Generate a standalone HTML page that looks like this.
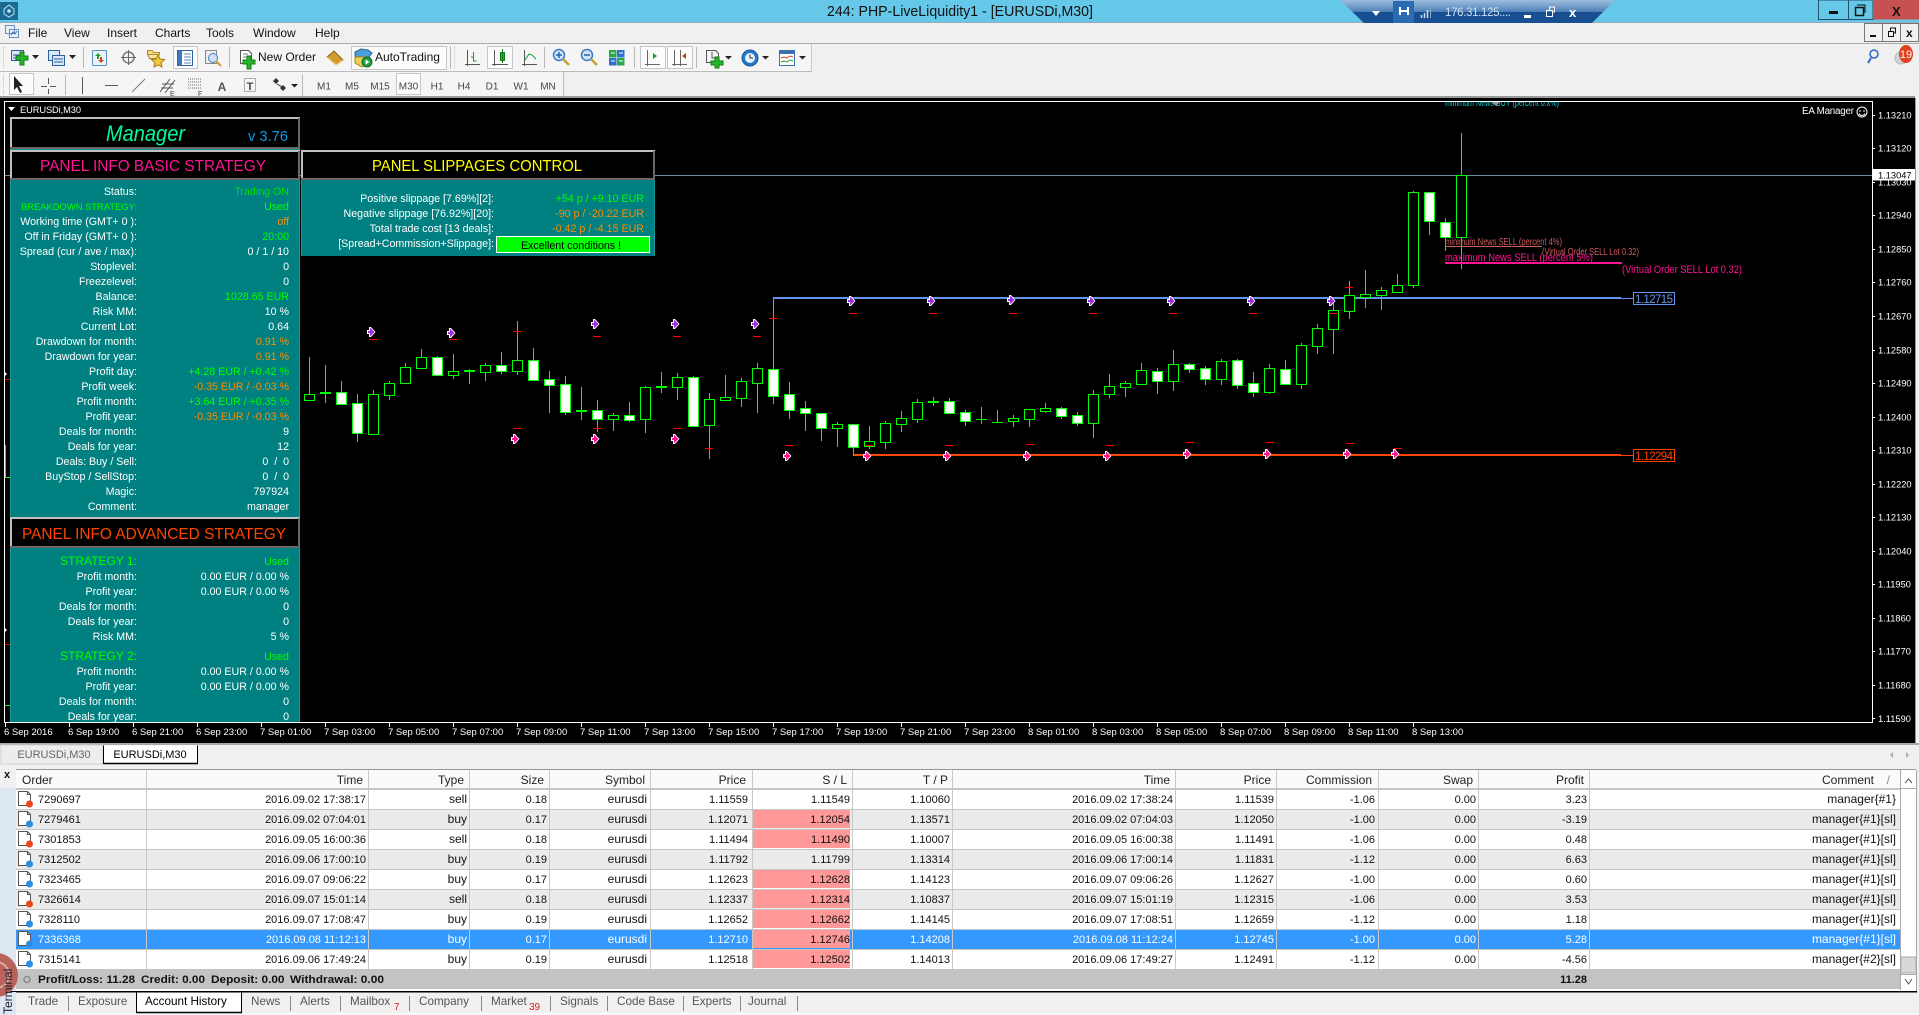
<!DOCTYPE html>
<html><head><meta charset="utf-8"><title>MetaTrader</title>
<style>
html,body{margin:0;padding:0;background:#f0f0f0;overflow:hidden}
svg{position:absolute;left:0;top:0;display:block;font-family:"Liberation Sans",Arial,sans-serif}
.e{text-anchor:end}.m{text-anchor:middle}
</style></head><body>
<svg width="1919" height="1015" viewBox="0 0 1919 1015" xmlns="http://www.w3.org/2000/svg">
<defs>
<g id="mp"><path d="M-4-2h2v-3h2l4.500 5-4.500 5h-2v-3h-2z" fill="#fff"/><path d="M-3-1h2v-3h.5l4 4-4 4h-.5v-3h-2z" fill="#9a30d8"/></g>
<g id="mk"><path d="M-4-2h2v-3h2l4.500 5-4.500 5h-2v-3h-2z" fill="#fff"/><path d="M-3-1h2v-3h.5l4 4-4 4h-.5v-3h-2z" fill="#ff1493"/></g>
<g id="ds"><path d="M18.500 2.500h9l3 3v11h-12z" fill="#fff" stroke="#555"/><path d="M27.500 2.500v3h3" fill="none" stroke="#555"/><circle cx="29.500" cy="15" r="3.500" fill="#e8481c"/></g>
<g id="db"><path d="M18.500 2.500h9l3 3v11h-12z" fill="#fff" stroke="#555"/><path d="M27.500 2.500v3h3" fill="none" stroke="#555"/><circle cx="29.500" cy="15" r="3.500" fill="#2c8ee0"/></g>
<linearGradient id="rdp" x1="0" y1="0" x2="0" y2="1"><stop offset="0" stop-color="#9dbedd"/><stop offset=".45" stop-color="#4f80b8"/><stop offset=".47" stop-color="#174f92"/><stop offset="1" stop-color="#174f92"/></linearGradient>
</defs>

<!-- title bar -->
<rect width="1919" height="23" fill="#65c8e9"/>
<rect y="22" width="1919" height="1" fill="#9ab"/>
<rect x="0" y="2" width="18" height="18" fill="#1b6a94"/>
<path d="M9 5l5 4v5l-5 3-5-3V9z" fill="none" stroke="#bfe6f2" stroke-width="1"/><circle cx="9" cy="11" r="1.800" fill="#bfe6f2"/>
<text x="827" y="16" font-size="15" fill="#111" textLength="266" lengthAdjust="spacingAndGlyphs">244: PHP-LiveLiquidity1 - [EURUSDi,M30]</text>
<path d="M1340 0h275l-26 26h-222z" fill="url(#rdp)"/>
<path d="M1367 25.500h222" stroke="#889" stroke-width="1.500"/>
<path d="M1376 18l4-5h-8z" fill="#fff" transform="translate(0,-2)"/>
<rect x="1393" y="1" width="21" height="23" fill="#2a6bb4"/>
<path d="M1400 15v-8M1408 15v-8M1400 11h8" stroke="#fff" stroke-width="2"/>
<path d="M1421.500 18v-3M1424.500 18v-5M1427.500 18v-8" stroke="#cde" stroke-width="1.500"/><path d="M1430.500 18v-11" stroke="#8ab" stroke-width="1"/>
<text x="1445" y="16" font-size="11.500" fill="#cfe0f2" textLength="66">176.31.125....</text>
<rect x="1524" y="15" width="7" height="3" fill="#fff"/>
<path d="M1546.500 10.500h6v6h-6zM1549.500 10v-3h5v5h-2" fill="none" stroke="#fff"/>
<text x="1569" y="17" font-size="13" font-weight="bold" fill="#fff">x</text>
<rect x="1818.500" y="0" width="54.500" height="19.500" fill="#65c8e9" stroke="#24506a"/>
<path d="M1848.500 0v19" stroke="#24506a"/>
<rect x="1873" y="0" width="46" height="19.500" fill="#c75050"/>
<rect x="1829" y="11" width="9" height="3" fill="#111"/>
<path d="M1855.500 7.500h8v8h-8z" fill="none" stroke="#111" stroke-width="1.500"/><path d="M1857 5h8v8" fill="none" stroke="#111"/>
<text x="1892" y="16" font-size="13" font-weight="bold" fill="#111">X</text>

<!-- menu -->
<rect y="23" width="1919" height="20" fill="#f0f0f0"/>
<rect y="43" width="1919" height="1" fill="#aaa"/>
<g font-size="12" fill="#111">
<text x="28" y="37">File</text><text x="64" y="37">View</text><text x="107" y="37">Insert</text><text x="155" y="37">Charts</text><text x="206" y="37">Tools</text><text x="253" y="37">Window</text><text x="315" y="37">Help</text>
</g>
<path d="M5.500 25.500h9v8h-9zM9.500 29.500h9v8h-9z" fill="#e8f0fa" stroke="#6a90c0"/><path d="M11 35l2-3 2 2 2-3" fill="none" stroke="#3a70b0"/>
<rect x="1864.500" y="23.500" width="54" height="18" fill="#f0f0f0" stroke="#777"/>
<path d="M1882.500 23v19M1900.500 23v19" stroke="#777"/>
<rect x="1870" y="35" width="6" height="2" fill="#111"/>
<path d="M1888.500 31.500h5v5h-5zM1890.500 31v-3h5v5h-2" fill="none" stroke="#111"/>
<text x="1906" y="37" font-size="12" font-weight="bold" fill="#111">x</text>

<!-- toolbars -->
<rect y="44" width="812" height="27" fill="#f5f5f5"/><rect y="71" width="812" height="1" fill="#bbb"/>
<rect x="811" y="44" width="1" height="27" fill="#ccc"/>
<rect y="72" width="563" height="24" fill="#f5f5f5"/><rect x="563" y="72" width="1" height="24" fill="#bbb"/>
<g stroke="#b8b8b8"><path d="M83.500 47v21M229.500 47v21M450.500 46v23M544.500 47v21M634.500 47v21M696.500 47v21M65.500 75v20M302.500 74v22"/></g>
<path d="M3.500 47v22M3.500 75v20M454.500 47v22" stroke="#bbb" stroke-dasharray="1 1"/>
<!-- pressed boxes -->
<g fill="#fcfcfc" stroke="#c6c6c6"><rect x="173.500" y="46.500" width="24" height="22"/><rect x="351.500" y="46.500" width="95" height="23"/><rect x="487.500" y="46.500" width="25" height="22"/><rect x="640.500" y="46.500" width="25" height="22"/><rect x="667.500" y="46.500" width="25" height="22"/><rect x="9.500" y="73.500" width="24" height="21"/><rect x="396.500" y="73.500" width="24" height="21"/></g>
<!-- new chart -->
<rect x="11.500" y="50.500" width="12" height="10" fill="#dbe7f6" stroke="#2c5f9e"/><path d="M13 55h9M13 58h5" stroke="#2c5f9e"/>
<path d="M19 50h4v4h4v4h-4v5h-4v-5h-4v-4h4z" fill="#25b52a" stroke="#127a18" transform="translate(1,2)"/>
<path d="M32 55h7l-3.500 4z" fill="#222"/>
<!-- profiles -->
<rect x="48.500" y="50.500" width="11" height="10" fill="#dbe7f6" stroke="#2c5f9e"/><rect x="52.500" y="55.500" width="12" height="10" fill="#dbe7f6" stroke="#2c5f9e"/><path d="M54 59h9M54 62h9" stroke="#2c5f9e"/>
<path d="M69 55h7l-3.500 4z" fill="#222"/>
<!-- market watch -->
<rect x="92.500" y="50.500" width="14" height="15" rx="1" fill="#eaf2fb" stroke="#5b8dc8"/><path d="M95 56l3-3 3 3h-2v3h-2v-3z" fill="#2aa52a"/><path d="M98 60h2v-3h2v3h2l-3 3z" fill="#d8461e"/>
<!-- crosshair icon -->
<circle cx="128.500" cy="57.500" r="5.500" fill="none" stroke="#777" stroke-width="1.500"/><path d="M128.500 50v15M121 57.500h15" stroke="#666"/>
<!-- folder star -->
<path d="M147.500 54.500v-4h5l1 2h6v3" fill="#f5dc88" stroke="#b08a30"/><path d="M147.500 54.500h10l2 4h-10z" fill="#f7e6a4" stroke="#b08a30"/><path d="M158 55l2 4 4.500.500-3.300 3 .8 4.500-4-2.200-4 2.200.8-4.500-3.300-3 4.500-.5z" fill="#f3c93d" stroke="#a67c14"/>
<!-- navigator -->
<rect x="177.500" y="50.500" width="15" height="15" fill="#fff" stroke="#2f63a8"/><rect x="178" y="51" width="4" height="14" fill="#3d78c4"/><path d="M184 54h7M184 57h7M184 60h7M184 63h7" stroke="#5a88c0"/>
<!-- search doc -->
<rect x="205.500" y="50.500" width="11" height="13" fill="#eee" stroke="#888"/><circle cx="213" cy="58" r="4.500" fill="#cfe2f6" stroke="#4a7fb8"/><path d="M216 61l5 5" stroke="#c8a03c" stroke-width="2"/>
<!-- new order -->
<path d="M240.500 50.500h8l3 3v10h-11z" fill="#fff" stroke="#555"/><path d="M243 54h5M243 57h6M243 60h4" stroke="#777"/>
<path d="M247 58h4v4h4v4h-4v5h-4v-5h-4v-4h4z" fill="#25b52a" stroke="#127a18" transform="translate(0,-2)"/>
<text x="258" y="61" font-size="12" fill="#111">New Order</text>
<path d="M327 57l7-6 9 9-7 5z" fill="#d49b2c" stroke="#8a5e10"/><path d="M327 57l9 8 7-5" fill="none" stroke="#f4d683"/>
<!-- autotrading -->
<path d="M355 52l6-3 7 1 4 3-3 4-14 0z" fill="#4a9fd8" stroke="#27669a"/><path d="M355 57h13v6l-6 4-7-4z" fill="#f0cf56" stroke="#a58216"/><circle cx="367" cy="62" r="5" fill="#20a040" stroke="#0d6a24"/><path d="M365.500 59.500l4 2.500-4 2.500z" fill="#fff"/>
<text x="375" y="61" font-size="12" fill="#111">AutoTrading</text>
<!-- chart type icons -->
<g fill="none" stroke="#555"><path d="M467.500 50v16M465 64.500h15"/></g><path d="M473.500 52v9h3M471 57h2" fill="none" stroke="#1a9a2a"/>
<g fill="none" stroke="#555"><path d="M494.500 50v16M492 64.500h16"/></g><rect x="500.500" y="52.500" width="4" height="8" fill="#25b52a" stroke="#127a18"/><path d="M502.500 49v14" stroke="#127a18"/>
<g fill="none" stroke="#555"><path d="M524.500 50v16M522 64.500h15"/></g><path d="M525 60l4-6 3 1 4 4" fill="none" stroke="#1a9a2a"/>
<!-- zoom -->
<circle cx="559" cy="55" r="5.500" fill="#cfe5f8" stroke="#3a7ac0" stroke-width="1.500"/><path d="M556 55h6M559 52v6" stroke="#2a60a8" stroke-width="1.500"/><path d="M563 59l6 6" stroke="#c8a03c" stroke-width="2.500"/>
<circle cx="587" cy="55" r="5.500" fill="#cfe5f8" stroke="#3a7ac0" stroke-width="1.500"/><path d="M584 55h6" stroke="#2a60a8" stroke-width="1.500"/><path d="M591 59l6 6" stroke="#c8a03c" stroke-width="2.500"/>
<rect x="609" y="50" width="7.500" height="7.500" fill="#2aa84a"/><rect x="617" y="50" width="7.500" height="7.500" fill="#2f6fd0"/><rect x="609" y="58" width="7.500" height="7.500" fill="#2f6fd0"/><rect x="617" y="58" width="7.500" height="7.500" fill="#2aa84a"/><path d="M611 53h4M619 53h4M611 61h4M619 61h4" stroke="#fff"/>
<!-- shift -->
<g fill="none" stroke="#666"><path d="M647.500 50v16M645 64.500h15"/></g><path d="M653 53v6l4-3z" fill="#20a030"/>
<g fill="none" stroke="#666"><path d="M674.500 50v16M672 64.500h15M680.500 50v16"/></g><path d="M686 53v6l-4-3z" fill="#c83a1a"/>
<!-- periods -->
<path d="M706.500 50.500h9l3 3v9h-12z" fill="#f5f5f5" stroke="#555"/><path d="M712 52v6h3" fill="none" stroke="#555"/>
<path d="M715 60h4v4h4v4h-4v3h-4v-3h-4v-4h4z" fill="#25b52a" stroke="#127a18" transform="translate(0,-3)"/>
<path d="M725 56h7l-3.500 3.500z" fill="#222"/>
<circle cx="750" cy="58" r="8" fill="#2377c9" stroke="#155a9c"/><circle cx="750" cy="58" r="5" fill="#e8f2fb"/><path d="M750 54.500v3.500h3" fill="none" stroke="#333"/>
<path d="M762 56h7l-3.500 3.500z" fill="#222"/>
<rect x="779.500" y="50.500" width="15" height="15" fill="#fff" stroke="#3a70b0"/><rect x="780" y="51" width="14" height="3" fill="#3a70b0"/><path d="M781 58l3-1 3 1 3-2 3 1" fill="none" stroke="#c8421a"/><path d="M781 62l3-1 3 1 3-2 3 1" fill="none" stroke="#20a030"/>
<path d="M799 56h7l-3.500 3.500z" fill="#222"/>
<!-- right search + notif -->
<circle cx="1874" cy="54" r="4" fill="none" stroke="#2a6cc0" stroke-width="1.500"/><path d="M1871 58l-3 5" stroke="#2a6cc0" stroke-width="2"/>
<path d="M1896 63a6 6 0 1 1 12 0 6 6 0 0 1-12 0z" fill="#d0d4d8" stroke="#b8bcc0" transform="translate(-1,-5)"/>
<ellipse cx="1906" cy="54" rx="7" ry="9" fill="#e2401e"/><text x="1906" y="58" font-size="11" fill="#fff" class="m">19</text>

<!-- second toolbar -->
<path d="M14 76v14l3-3 3 6 2-1-3-6h4z" fill="#222"/>
<path d="M48.500 78v6M48.500 89v5M41 86.500h6M50 86.500h6" stroke="#555"/>
<path d="M82.500 77v17" stroke="#555"/>
<path d="M105 85.500h13" stroke="#555"/>
<path d="M132 92l13-13" stroke="#777"/>
<path d="M160 92l10-13M165 93l10-13M162 84h12M161 88h12" stroke="#555" fill="none"/><text x="170" y="96" font-size="7" fill="#444">E</text>
<path d="M188 79h14M188 82h14M188 85h14M188 88h14" stroke="#666" stroke-dasharray="1 1"/><text x="198" y="96" font-size="7" fill="#444">F</text>
<text x="222" y="91" font-size="12" font-weight="bold" fill="#555" class="m">A</text>
<rect x="244.500" y="78.500" width="11" height="13" fill="none" stroke="#666" stroke-dasharray="1 1"/><text x="250" y="90" font-size="11" font-weight="bold" fill="#444" class="m">T</text>
<path d="M273 81l3-3 3 3-3 3zM280 88l3-3 3 3-3 3z" fill="#333"/><path d="M277 84l5 3" stroke="#333"/>
<path d="M291 84h7l-3.500 3.500z" fill="#222"/>
<g font-size="10" fill="#444" class="m"><text x="324" y="89.500">M1</text><text x="352" y="89.500">M5</text><text x="380" y="89.500">M15</text><text x="408.500" y="89.500">M30</text><text x="437" y="89.500">H1</text><text x="464" y="89.500">H4</text><text x="492" y="89.500">D1</text><text x="521" y="89.500">W1</text><text x="548" y="89.500">MN</text></g>

<!-- chart window -->
<rect y="96" width="1919" height="2" fill="#999"/>
<rect y="98" width="1915" height="645" fill="#000"/>
<rect x="1915" y="96" width="4" height="649" fill="#f0f0f0"/>
<rect x="1915" y="98" width="1" height="645" fill="#999"/>
<path d="M4.500 101.500H1872.500V722.500H4.500z" fill="none" stroke="#fff"/>

<!-- bid line -->
<path d="M5 175.500H1872" stroke="#778899"/>
<!-- left-edge remnants -->
<path d="M5.500 445V477.500H10" fill="none" stroke="#0f0"/><path d="M5 379.500h5M5 644.500h5" stroke="#f00"/><path d="M5 705.500h5" stroke="#0f0"/><path d="M5 372l2 2-2 2zM5 628l2 2-2 2z" fill="#fff"/>

<!-- level lines -->
<rect x="773" y="297" width="848" height="2" fill="#6495ed"/>
<path d="M1621 298.500h12" stroke="#6495ed"/>
<rect x="853" y="454" width="768" height="2" fill="#ff4500"/>
<path d="M1621 455.500h12" stroke="#ff4500"/>
<path d="M773.500 298V340" stroke="#0f0"/>

<!-- candles -->
<g shape-rendering="crispEdges">
<path fill="none" stroke="#0f0" d="M309.500 357V401M325.500 365V403M341.500 381V405M357.500 394V442M373.500 390V435M389.500 381V400M405.500 363V384M421.500 349V369M437.500 356V376M453.500 354V379M469.500 369V384M485.500 363V381M501.500 352V374M517.500 321V375M533.500 348V380M549.500 371V413M565.500 376V415M581.500 387V420M597.500 400V432M613.500 413V431M629.500 402V422M645.500 386V433M661.500 372V393M677.500 373V400M693.500 376V426M709.500 393V459M725.500 375V401M741.500 378V407M757.500 363V413M773.500 298V404M789.500 382V419M805.500 401V431M821.500 413V441M837.500 422V447M853.500 424V456M869.500 426V449M885.500 421V449M901.500 411V432M917.500 399V423M933.500 397V406M949.500 398V414M965.500 410V426M981.500 407V424M997.500 410V423M1013.500 415V427M1029.500 409V427M1045.500 403V413M1061.500 407V419M1077.500 412V426M1093.500 390V438M1109.500 374V398M1125.500 381V397M1141.500 363V385M1157.500 368V394M1173.500 350V391M1189.500 363V373M1205.500 366V385M1221.500 359V385M1237.500 359V389M1253.500 372V397M1269.500 364V394M1285.500 360V384M1301.500 343V389M1317.500 324V354M1333.500 302V354M1349.500 281V319M1365.500 270V308M1381.500 287V310M1397.500 274V293M1413.500 191V288M1429.500 192V235M1445.500 218V251M1461.500 133V269"/>
<path fill="#000" stroke="#0f0" d="M304.500 394.500h10v6h-10zM368.500 394.500h10v40h-10zM384.500 383.500h10v12h-10zM400.500 367.500h10v16h-10zM416.500 357.500h10v11h-10zM448.500 371.500h10v4h-10zM480.500 365.500h10v7h-10zM512.500 360.500h10v11h-10zM608.500 415.500h10v4h-10zM640.500 387.500h10v32h-10zM672.500 377.500h10v10h-10zM704.500 399.500h10v26h-10zM720.500 397.500h10v3h-10zM736.500 381.500h10v17h-10zM752.500 368.500h10v15h-10zM832.500 424.500h10v4h-10zM864.500 441.500h10v5h-10zM880.500 423.500h10v19h-10zM896.500 418.500h10v6h-10zM912.500 402.500h10v17h-10zM1008.500 418.500h10v3h-10zM1024.500 409.500h10v10h-10zM1040.500 408.500h10v3h-10zM1088.500 394.500h10v29h-10zM1104.500 386.500h10v8h-10zM1120.500 383.500h10v4h-10zM1136.500 370.500h10v14h-10zM1168.500 364.500h10v17h-10zM1216.500 361.500h10v18h-10zM1264.500 368.500h10v24h-10zM1296.500 345.500h10v39h-10zM1312.500 328.500h10v18h-10zM1328.500 310.500h10v19h-10zM1344.500 295.500h10v16h-10zM1360.500 294.500h10v3h-10zM1376.500 290.500h10v5h-10zM1392.500 285.500h10v7h-10zM1408.500 192.500h10v93h-10zM1456.500 175.500h10v62h-10z"/>
<path fill="#fff" stroke="#0f0" d="M336.500 392.500h10v12h-10zM352.500 403.500h10v30h-10zM432.500 357.500h10v18h-10zM496.500 365.500h10v6h-10zM528.500 360.500h10v20h-10zM544.500 379.500h10v6h-10zM560.500 384.500h10v28h-10zM592.500 410.500h10v9h-10zM624.500 415.500h10v5h-10zM688.500 377.500h10v49h-10zM768.500 369.500h10v27h-10zM784.500 394.500h10v16h-10zM800.500 408.500h10v5h-10zM816.500 413.500h10v15h-10zM848.500 424.500h10v23h-10zM944.500 401.500h10v12h-10zM960.500 412.500h10v9h-10zM1056.500 408.500h10v8h-10zM1072.500 415.500h10v8h-10zM1152.500 371.500h10v10h-10zM1184.500 364.500h10v5h-10zM1200.500 368.500h10v11h-10zM1232.500 360.500h10v25h-10zM1248.500 383.500h10v9h-10zM1280.500 369.500h10v15h-10zM1424.500 192.500h10v29h-10zM1440.500 222.500h10v15h-10z"/>
<path fill="#0f0" d="M320 392h11v2h-11zM464 370h11v2h-11zM576 410h11v2h-11zM656 386h11v2h-11zM928 401h11v2h-11zM976 419h11v1h-11zM992 422h11v1h-11z"/>
<!-- red dashes -->
<path fill="none" stroke="#f00" d="M369 339.500h8M449 339.500h8M513 331.500h8M593 336.500h8M673 336.500h8M753 336.500h8M769 318.500h8M849 313.500h8M929 313.500h8M1009 313.500h8M1089 313.500h8M1169 313.500h8M1249 313.500h8M1329 313.500h8M1345 287.500h8M513 428.500h8M593 428.500h8M673 428.500h8M705 448.500h8M785 445.500h8M865 445.500h8M945 445.500h8M1026 444.500h8M1106 445.500h8M1186 442.500h8M1266 442.500h8M1346 443.500h8M1394 448.500h8"/>
</g>
<!-- markers -->
<use href="#mp" x="371" y="332"/><use href="#mp" x="451" y="333"/><use href="#mp" x="595" y="324"/><use href="#mp" x="675" y="324"/><use href="#mp" x="755" y="324"/><use href="#mp" x="851" y="301"/><use href="#mp" x="931" y="301"/><use href="#mp" x="1011" y="300"/><use href="#mp" x="1091" y="301"/><use href="#mp" x="1171" y="301"/><use href="#mp" x="1251" y="301"/><use href="#mp" x="1331" y="301"/>
<use href="#mk" x="515" y="439"/><use href="#mk" x="595" y="439"/><use href="#mk" x="675" y="439"/><use href="#mk" x="787" y="456"/><use href="#mk" x="867" y="456"/><use href="#mk" x="947" y="456"/><use href="#mk" x="1027" y="456"/><use href="#mk" x="1107" y="456"/><use href="#mk" x="1187" y="454"/><use href="#mk" x="1267" y="454"/><use href="#mk" x="1347" y="454"/><use href="#mk" x="1395" y="454"/>

<!-- news labels -->
<svg x="1440" y="102" width="130" height="6" overflow="hidden"><text x="5" y="4" font-size="9.800" fill="#00ced1" textLength="114" lengthAdjust="spacingAndGlyphs">minimum News BUY (percent 0.x%)</text></svg>
<path d="M1492 102h8l-4 4z" fill="#999"/>
<text x="1445" y="245" font-size="9.800" fill="#cd5c5c" textLength="117" lengthAdjust="spacingAndGlyphs">minimum News SELL (percent 4%)</text>
<path d="M1445 246.500h97" stroke="#cd5c5c"/>
<text x="1542" y="255" font-size="9.800" fill="#cd5c5c" textLength="97" lengthAdjust="spacingAndGlyphs">(Virtual Order SELL Lot 0.32)</text>
<text x="1445" y="261" font-size="11" fill="#ff1493" textLength="148" lengthAdjust="spacingAndGlyphs">maximum News SELL (percent 5%)</text>
<rect x="1445" y="262" width="177" height="2" fill="#ff1493"/>
<text x="1622" y="273" font-size="11" fill="#ff1493" textLength="120" lengthAdjust="spacingAndGlyphs">(Virtual Order SELL Lot 0.32)</text>
<!-- level labels -->
<rect x="1633.500" y="292.500" width="41" height="12" fill="#000" stroke="#6495ed"/><text x="1654" y="303" font-size="11.500" fill="#6495ed" class="m" textLength="38">1.12715</text>
<rect x="1633.500" y="449.500" width="41" height="12" fill="#000" stroke="#ff4500"/><text x="1654" y="460" font-size="11.500" fill="#ff4500" class="m" textLength="38">1.12294</text>

<!-- EA manager -->
<text x="1802" y="114" font-size="9.800" fill="#fff" textLength="52">EA Manager</text>
<circle cx="1862" cy="112" r="5" fill="none" stroke="#fff"/><circle cx="1860" cy="111" r=".8" fill="#fff"/><circle cx="1864" cy="111" r=".8" fill="#fff"/><path d="M1859 113.500a3.300 3.300 0 0 0 6 0" fill="none" stroke="#fff"/>

<!-- symbol -->
<path d="M8 107h7l-3.500 4z" fill="#fff"/>
<text x="20" y="113" font-size="9.300" fill="#fff" textLength="61">EURUSDi,M30</text>

<!-- price axis -->
<g stroke="#fff"><path d="M1872 115.500h3M1872 148.500h3M1872 182.500h3M1872 215.500h3M1872 249.500h3M1872 282.500h3M1872 316.500h3M1872 350.500h3M1872 383.500h3M1872 417.500h3M1872 450.500h3M1872 484.500h3M1872 517.500h3M1872 551.500h3M1872 584.500h3M1872 618.500h3M1872 651.500h3M1872 685.500h3M1872 718.500h3"/></g>
<g font-size="9.300" fill="#fff">
<text x="1878" y="118.500">1.13210</text><text x="1878" y="151.500">1.13120</text><text x="1878" y="185.500">1.13030</text><text x="1878" y="218.500">1.12940</text><text x="1878" y="252.500">1.12850</text><text x="1878" y="285.500">1.12760</text><text x="1878" y="319.500">1.12670</text><text x="1878" y="353.500">1.12580</text><text x="1878" y="386.500">1.12490</text><text x="1878" y="420.500">1.12400</text><text x="1878" y="453.500">1.12310</text><text x="1878" y="487.500">1.12220</text><text x="1878" y="520.500">1.12130</text><text x="1878" y="554.500">1.12040</text><text x="1878" y="587.500">1.11950</text><text x="1878" y="621.500">1.11860</text><text x="1878" y="654.500">1.11770</text><text x="1878" y="688.500">1.11680</text><text x="1878" y="722">1.11590</text>
</g>
<rect x="1873" y="169" width="42" height="11.500" fill="#fff"/><text x="1878" y="178.500" font-size="9.300" fill="#000">1.13047</text>

<!-- time axis -->
<path stroke="#fff" d="M5.500 722v5M69.500 722v5M133.500 722v5M197.500 722v5M261.500 722v5M325.500 722v5M389.500 722v5M453.500 722v5M517.500 722v5M581.500 722v5M645.500 722v5M709.500 722v5M773.500 722v5M837.500 722v5M901.500 722v5M965.500 722v5M1029.500 722v5M1093.500 722v5M1157.500 722v5M1221.500 722v5M1285.500 722v5M1349.500 722v5M1413.500 722v5"/>
<g font-size="9.500" fill="#fff">
<text x="4" y="735">6 Sep 2016</text><text x="68" y="735">6 Sep 19:00</text><text x="132" y="735">6 Sep 21:00</text><text x="196" y="735">6 Sep 23:00</text><text x="260" y="735">7 Sep 01:00</text><text x="324" y="735">7 Sep 03:00</text><text x="388" y="735">7 Sep 05:00</text><text x="452" y="735">7 Sep 07:00</text><text x="516" y="735">7 Sep 09:00</text><text x="580" y="735">7 Sep 11:00</text><text x="644" y="735">7 Sep 13:00</text><text x="708" y="735">7 Sep 15:00</text><text x="772" y="735">7 Sep 17:00</text><text x="836" y="735">7 Sep 19:00</text><text x="900" y="735">7 Sep 21:00</text><text x="964" y="735">7 Sep 23:00</text><text x="1028" y="735">8 Sep 01:00</text><text x="1092" y="735">8 Sep 03:00</text><text x="1156" y="735">8 Sep 05:00</text><text x="1220" y="735">8 Sep 07:00</text><text x="1284" y="735">8 Sep 09:00</text><text x="1348" y="735">8 Sep 11:00</text><text x="1412" y="735">8 Sep 13:00</text>
</g>

<!-- panels -->
<rect x="10" y="180" width="290" height="337" fill="#008080"/>
<rect x="10" y="547" width="290" height="175" fill="#008080"/>
<rect x="301" y="180" width="354" height="76" fill="#008080"/>
<rect x="10" y="148" width="290" height="2" fill="#1a9696"/>
<path d="M10.500 180v542M299.500 180v542M301.500 180v76M654.500 180v76" stroke="#1a9a9a"/>
<g fill="#000" stroke-width="2">
<rect x="11" y="118" width="288" height="30" stroke="#c0c0c0"/>
<rect x="11" y="151" width="288" height="28" stroke="#c0c0c0"/>
<rect x="302" y="151" width="352" height="28" stroke="#c0c0c0"/>
<rect x="11" y="518" width="288" height="29" stroke="#c0c0c0"/>
</g>
<path d="M299 118v30H10M299 151v28H10M654 151v28H301M299 518v29H10" fill="none" stroke="#696969" stroke-width="2"/>
<text x="106" y="141" font-size="22" font-style="italic" fill="#00fa9a" textLength="79" lengthAdjust="spacingAndGlyphs">Manager</text>
<text x="248" y="141" font-size="15" fill="#0a9ae8" textLength="40" lengthAdjust="spacingAndGlyphs">v 3.76</text>
<text x="40" y="171" font-size="15.500" fill="#ff1493" textLength="226" lengthAdjust="spacingAndGlyphs">PANEL INFO BASIC STRATEGY</text>
<text x="372" y="171" font-size="15.500" fill="#ffff00" textLength="210" lengthAdjust="spacingAndGlyphs">PANEL SLIPPAGES CONTROL</text>
<text x="22" y="539" font-size="15.500" fill="#ff4500" textLength="264" lengthAdjust="spacingAndGlyphs">PANEL INFO ADVANCED STRATEGY</text>

<g font-size="10.670" fill="#fff" class="e">
<text x="137" y="195">Status:</text>
<text x="137" y="210" fill="#00ff00" font-size="9.400">BREAKDOWN STRATEGY:</text>
<text x="137" y="225">Working time (GMT+ 0 ):</text><text x="137" y="240">Off in Friday (GMT+ 0 ):</text><text x="137" y="255">Spread (cur / ave / max):</text><text x="137" y="270">Stoplevel:</text><text x="137" y="285">Freezelevel:</text><text x="137" y="300">Balance:</text><text x="137" y="315">Risk MM:</text><text x="137" y="330">Current Lot:</text><text x="137" y="345">Drawdown for month:</text><text x="137" y="360">Drawdown for year:</text><text x="137" y="375">Profit day:</text><text x="137" y="390">Profit week:</text><text x="137" y="405">Profit month:</text><text x="137" y="420">Profit year:</text><text x="137" y="435">Deals for month:</text><text x="137" y="450">Deals for year:</text><text x="137" y="465">Deals: Buy / Sell:</text><text x="137" y="480">BuyStop / SellStop:</text><text x="137" y="495">Magic:</text><text x="137" y="510">Comment:</text>
<text x="289" y="195" fill="#00e000">Trading ON</text><text x="289" y="210" fill="#00ff00">Used</text><text x="289" y="225" fill="#ff8c00">off</text><text x="289" y="240" fill="#00ff00">20:00</text><text x="289" y="255">0 / 1 / 10</text><text x="289" y="270">0</text><text x="289" y="285">0</text><text x="289" y="300" fill="#00ff00">1028.65 EUR</text><text x="289" y="315">10 %</text><text x="289" y="330">0.64</text><text x="289" y="345" fill="#ff8c00">0.91 %</text><text x="289" y="360" fill="#ff8c00">0.91 %</text><text x="289" y="375" fill="#00ff00">+4.28 EUR / +0.42 %</text><text x="289" y="390" fill="#ff8c00">-0.35 EUR / -0.03 %</text><text x="289" y="405" fill="#00ff00">+3.64 EUR / +0.35 %</text><text x="289" y="420" fill="#ff8c00">-0.35 EUR / -0.03 %</text><text x="289" y="435">9</text><text x="289" y="450">12</text><text x="289" y="465">0 &#160;/&#160; 0</text><text x="289" y="480">0 &#160;/&#160; 0</text><text x="289" y="495">797924</text><text x="289" y="510">manager</text>
<text x="137" y="565" fill="#00ff00" font-size="12">STRATEGY 1:</text><text x="289" y="565" fill="#00ff00">Used</text>
<text x="137" y="580">Profit month:</text><text x="289" y="580">0.00 EUR / 0.00 %</text>
<text x="137" y="595">Profit year:</text><text x="289" y="595">0.00 EUR / 0.00 %</text>
<text x="137" y="610">Deals for month:</text><text x="289" y="610">0</text>
<text x="137" y="625">Deals for year:</text><text x="289" y="625">0</text>
<text x="137" y="640">Risk MM:</text><text x="289" y="640">5 %</text>
<text x="137" y="660" fill="#00ff00" font-size="12">STRATEGY 2:</text><text x="289" y="660" fill="#00ff00">Used</text>
<text x="137" y="675">Profit month:</text><text x="289" y="675">0.00 EUR / 0.00 %</text>
<text x="137" y="690">Profit year:</text><text x="289" y="690">0.00 EUR / 0.00 %</text>
<text x="137" y="705">Deals for month:</text><text x="289" y="705">0</text>
<text x="137" y="720">Deals for year:</text><text x="289" y="720">0</text>
<text x="494" y="202">Positive slippage [7.69%][2]:</text><text x="494" y="217">Negative slippage [76.92%][20]:</text><text x="494" y="232">Total trade cost [13 deals]:</text><text x="494" y="247">[Spread+Commission+Slippage]:</text>
<text x="644" y="202" fill="#00ff00">+54 p / +9.10 EUR</text><text x="644" y="217" fill="#ff8c00">-90 p / -20.22 EUR</text><text x="644" y="232" fill="#ff8c00">-0.42 p / -4.15 EUR</text>
</g>
<rect x="496.500" y="236.500" width="153" height="16" fill="#00ff00" stroke="#fff"/>
<text x="571" y="249" font-size="10.670" fill="#000" class="m">Excellent conditions !</text>

<!-- chart tabs -->
<rect y="743" width="1919" height="2" fill="#a8a8a8"/>
<rect y="745" width="1919" height="25" fill="#f0f0f0"/>
<rect x="1" y="745" width="102" height="19" fill="#ededed" stroke="#d0d0d0"/>
<text x="54" y="758" font-size="11" fill="#666" class="m">EURUSDi,M30</text>
<path d="M103.500 745.500V763.500H197.500V745.500" fill="#fff" stroke="#000"/><path d="M103 763.500h95" stroke="#000" stroke-width="1.500"/>
<text x="150" y="758" font-size="11" fill="#000" class="m">EURUSDi,M30</text>
<path d="M1893 752l-3 3 3 3zM1906 752l3 3-3 3z" fill="#aaa"/>

<!-- terminal -->
<rect x="0" y="770" width="16" height="221" fill="#dde7f2"/>
<rect x="0" y="770" width="16" height="18" fill="#f0f0f0"/>
<text x="4" y="778" font-size="11" font-weight="bold" fill="#111">x</text>
<rect x="16" y="769" width="1900" height="222" fill="#fff"/>
<rect x="16" y="769" width="1900" height="1" fill="#999"/>
<rect x="16" y="770" width="1885" height="19" fill="#fafafa"/>
<rect x="16" y="809" width="1885" height="20" fill="#ebebeb"/>
<rect x="16" y="849" width="1885" height="20" fill="#ebebeb"/>
<rect x="16" y="889" width="1885" height="20" fill="#ebebeb"/>
<rect x="16" y="929" width="1885" height="20" fill="#3399ff"/>
<g fill="#ff9999">
<rect x="752" y="810" width="98" height="18"/><rect x="752" y="830" width="98" height="18"/><rect x="752" y="870" width="98" height="18"/><rect x="752" y="890" width="98" height="18"/><rect x="752" y="910" width="98" height="18"/><rect x="752" y="930" width="98" height="18"/><rect x="752" y="950" width="98" height="18"/>
</g>
<path stroke="#c8c8c8" d="M146.500 770v199M368.500 770v199M469.500 770v199M549.500 770v199M650.500 770v199M752.500 770v199M852.500 770v199M952.500 770v199M1175.500 770v199M1276.500 770v199M1378.500 770v199M1478.500 770v199M1589.500 770v199"/>
<path stroke="#c4c4c4" d="M16 788.500h1885M16 789.500h1885M16 809.500h1885M16 829.500h1885M16 849.500h1885M16 869.500h1885M16 889.500h1885M16 909.500h1885M16 929.500h1885M16 949.500h1885"/>
<g font-size="12" fill="#222" class="e">
<text x="22" y="784" style="text-anchor:start">Order</text><text x="363" y="784">Time</text><text x="464" y="784">Type</text><text x="544" y="784">Size</text><text x="645" y="784">Symbol</text><text x="746" y="784">Price</text><text x="847" y="784">S / L</text><text x="948" y="784">T / P</text><text x="1170" y="784">Time</text><text x="1271" y="784">Price</text><text x="1372" y="784">Commission</text><text x="1473" y="784">Swap</text><text x="1584" y="784">Profit</text><text x="1874" y="784">Comment</text><text x="1890" y="784" fill="#888">/</text>
</g>
<use href="#ds" y="789"/><use href="#db" y="809"/><use href="#ds" y="829"/><use href="#db" y="849"/><use href="#db" y="869"/><use href="#ds" y="889"/><use href="#db" y="909"/><use href="#db" y="929"/><use href="#db" y="949"/>
<g font-size="11" fill="#111" class="e">
<text x="38" y="803" style="text-anchor:start">7290697</text><text x="366" y="803">2016.09.02 17:38:17</text><text x="467" y="803" font-size="12">sell</text><text x="547" y="803">0.18</text><text x="647" y="803" font-size="12">eurusdi</text><text x="748" y="803">1.11559</text><text x="850" y="803">1.11549</text><text x="950" y="803">1.10060</text><text x="1173" y="803">2016.09.02 17:38:24</text><text x="1274" y="803">1.11539</text><text x="1375" y="803">-1.06</text><text x="1476" y="803">0.00</text><text x="1587" y="803">3.23</text><text x="1896" y="803" font-size="12">manager{#1}</text>
<text x="38" y="823" style="text-anchor:start">7279461</text><text x="366" y="823">2016.09.02 07:04:01</text><text x="467" y="823" font-size="12">buy</text><text x="547" y="823">0.17</text><text x="647" y="823" font-size="12">eurusdi</text><text x="748" y="823">1.12071</text><text x="850" y="823">1.12054</text><text x="950" y="823">1.13571</text><text x="1173" y="823">2016.09.02 07:04:03</text><text x="1274" y="823">1.12050</text><text x="1375" y="823">-1.00</text><text x="1476" y="823">0.00</text><text x="1587" y="823">-3.19</text><text x="1896" y="823" font-size="12">manager{#1}[sl]</text>
<text x="38" y="843" style="text-anchor:start">7301853</text><text x="366" y="843">2016.09.05 16:00:36</text><text x="467" y="843" font-size="12">sell</text><text x="547" y="843">0.18</text><text x="647" y="843" font-size="12">eurusdi</text><text x="748" y="843">1.11494</text><text x="850" y="843">1.11490</text><text x="950" y="843">1.10007</text><text x="1173" y="843">2016.09.05 16:00:38</text><text x="1274" y="843">1.11491</text><text x="1375" y="843">-1.06</text><text x="1476" y="843">0.00</text><text x="1587" y="843">0.48</text><text x="1896" y="843" font-size="12">manager{#1}[sl]</text>
<text x="38" y="863" style="text-anchor:start">7312502</text><text x="366" y="863">2016.09.06 17:00:10</text><text x="467" y="863" font-size="12">buy</text><text x="547" y="863">0.19</text><text x="647" y="863" font-size="12">eurusdi</text><text x="748" y="863">1.11792</text><text x="850" y="863">1.11799</text><text x="950" y="863">1.13314</text><text x="1173" y="863">2016.09.06 17:00:14</text><text x="1274" y="863">1.11831</text><text x="1375" y="863">-1.12</text><text x="1476" y="863">0.00</text><text x="1587" y="863">6.63</text><text x="1896" y="863" font-size="12">manager{#1}[sl]</text>
<text x="38" y="883" style="text-anchor:start">7323465</text><text x="366" y="883">2016.09.07 09:06:22</text><text x="467" y="883" font-size="12">buy</text><text x="547" y="883">0.17</text><text x="647" y="883" font-size="12">eurusdi</text><text x="748" y="883">1.12623</text><text x="850" y="883">1.12628</text><text x="950" y="883">1.14123</text><text x="1173" y="883">2016.09.07 09:06:26</text><text x="1274" y="883">1.12627</text><text x="1375" y="883">-1.00</text><text x="1476" y="883">0.00</text><text x="1587" y="883">0.60</text><text x="1896" y="883" font-size="12">manager{#1}[sl]</text>
<text x="38" y="903" style="text-anchor:start">7326614</text><text x="366" y="903">2016.09.07 15:01:14</text><text x="467" y="903" font-size="12">sell</text><text x="547" y="903">0.18</text><text x="647" y="903" font-size="12">eurusdi</text><text x="748" y="903">1.12337</text><text x="850" y="903">1.12314</text><text x="950" y="903">1.10837</text><text x="1173" y="903">2016.09.07 15:01:19</text><text x="1274" y="903">1.12315</text><text x="1375" y="903">-1.06</text><text x="1476" y="903">0.00</text><text x="1587" y="903">3.53</text><text x="1896" y="903" font-size="12">manager{#1}[sl]</text>
<text x="38" y="923" style="text-anchor:start">7328110</text><text x="366" y="923">2016.09.07 17:08:47</text><text x="467" y="923" font-size="12">buy</text><text x="547" y="923">0.19</text><text x="647" y="923" font-size="12">eurusdi</text><text x="748" y="923">1.12652</text><text x="850" y="923">1.12662</text><text x="950" y="923">1.14145</text><text x="1173" y="923">2016.09.07 17:08:51</text><text x="1274" y="923">1.12659</text><text x="1375" y="923">-1.12</text><text x="1476" y="923">0.00</text><text x="1587" y="923">1.18</text><text x="1896" y="923" font-size="12">manager{#1}[sl]</text>
<g fill="#fff"><text x="38" y="943" style="text-anchor:start">7336368</text><text x="366" y="943">2016.09.08 11:12:13</text><text x="467" y="943" font-size="12">buy</text><text x="547" y="943">0.17</text><text x="647" y="943" font-size="12">eurusdi</text><text x="748" y="943">1.12710</text><text x="850" y="943" fill="#111">1.12746</text><text x="950" y="943">1.14208</text><text x="1173" y="943">2016.09.08 11:12:24</text><text x="1274" y="943">1.12745</text><text x="1375" y="943">-1.00</text><text x="1476" y="943">0.00</text><text x="1587" y="943">5.28</text><text x="1896" y="943" font-size="12">manager{#1}[sl]</text></g>
<text x="38" y="963" style="text-anchor:start">7315141</text><text x="366" y="963">2016.09.06 17:49:24</text><text x="467" y="963" font-size="12">buy</text><text x="547" y="963">0.19</text><text x="647" y="963" font-size="12">eurusdi</text><text x="748" y="963">1.12518</text><text x="850" y="963">1.12502</text><text x="950" y="963">1.14013</text><text x="1173" y="963">2016.09.06 17:49:27</text><text x="1274" y="963">1.12491</text><text x="1375" y="963">-1.12</text><text x="1476" y="963">0.00</text><text x="1587" y="963">-4.56</text><text x="1896" y="963" font-size="12">manager{#2}[sl]</text>
</g>
<!-- summary -->
<rect x="16" y="969" width="1885" height="20" fill="#c3c3c3"/>
<circle cx="27" cy="979.500" r="3" fill="none" stroke="#888" stroke-width="1.500"/>
<g font-size="11" font-weight="bold" fill="#111">
<text x="38" y="983" textLength="97" lengthAdjust="spacingAndGlyphs">Profit/Loss: 11.28</text><text x="141" y="983" textLength="64" lengthAdjust="spacingAndGlyphs">Credit: 0.00</text><text x="211" y="983" textLength="73.500" lengthAdjust="spacingAndGlyphs">Deposit: 0.00</text><text x="290" y="983" textLength="94" lengthAdjust="spacingAndGlyphs">Withdrawal: 0.00</text>
<text x="1587" y="983" class="e">11.28</text>
</g>
<!-- scrollbar -->
<rect x="1901" y="770" width="15" height="220" fill="#fff"/><path d="M1900.500 770v220M1916.500 770v221" stroke="#aaa"/>
<path d="M1901 788.500h15M1901 974.500h15" stroke="#aaa"/>
<rect x="1901" y="957" width="15" height="16" fill="#d8d8d8" stroke="#aaa"/>
<path d="M1905 783l3.500-4 3.500 4M1905 979l3.500 5 3.500-5" fill="none" stroke="#555"/>
<!-- bottom -->
<rect y="991" width="1917" height="1.500" fill="#000"/>
<rect y="992.500" width="1919" height="22.500" fill="#f0f0f0"/>
<rect y="1013" width="1919" height="2" fill="#f8f8f8"/>
<rect x="0" y="992" width="16" height="23" fill="#dde7f2"/>
<path d="M136.500 992.500V1012.500H241.500V992.500" fill="#fff" stroke="#000"/>
<path d="M136 1012.500h106" stroke="#000" stroke-width="1.500"/>
<g font-size="11.700" fill="#555">
<text x="28" y="1005">Trade</text><text x="78" y="1005">Exposure</text><text x="145" y="1005" fill="#000">Account History</text><text x="251" y="1005">News</text><text x="300" y="1005">Alerts</text><text x="350" y="1005">Mailbox</text><text x="419" y="1005">Company</text><text x="491" y="1005">Market</text><text x="560" y="1005">Signals</text><text x="617" y="1005">Code Base</text><text x="692" y="1005">Experts</text><text x="748" y="1005">Journal</text>
</g>
<text x="394" y="1010" font-size="10" fill="#e02020">7</text><text x="529" y="1010" font-size="10" fill="#e02020">39</text>
<path stroke="#888" d="M68.500 996v15M290.500 996v15M340.500 996v15M409.500 996v15M481.500 996v15M550.500 996v15M607.500 996v15M683.500 996v15M740.500 996v15M797.500 996v15"/>
<!-- left badge & Terminal label -->
<circle cx="-4" cy="975" r="22" fill="#b9635c"/><circle cx="-4" cy="975" r="13" fill="none" stroke="#e0a8a0" stroke-width="2"/>
<text transform="translate(12,1014) rotate(-90)" font-size="12" fill="#223">Terminal</text>
</svg>
</body></html>
